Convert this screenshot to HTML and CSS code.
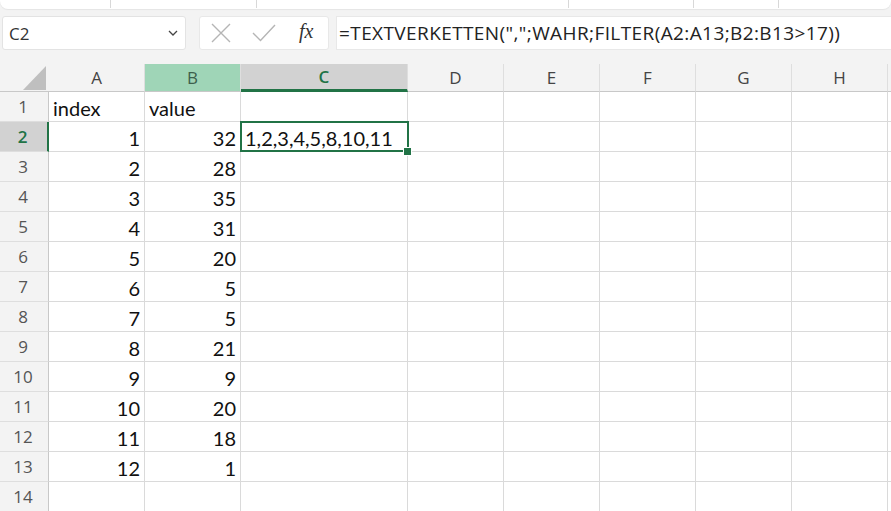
FILE: index.html
```html
<!DOCTYPE html>
<html>
<head>
<meta charset="utf-8">
<link rel="stylesheet" href="styles.css">
</head>
<body>
<div class="ribbon-edge">
  <span class="div d1"></span><span class="div d2"></span><span class="div d3"></span><span class="div d4"></span><span class="div d5"></span>
</div>
<div class="formula-row">
  <div class="name-box"><span>C2</span>
    <svg class="chev" width="10" height="6" viewBox="0 0 10 6"><path d="M1 1 L5 5 L9 1" fill="none" stroke="#444" stroke-width="1.3"/></svg>
  </div>
  <div class="fx-box">
    <svg width="20" height="20" viewBox="0 0 20 20"><path d="M1 1 L19 19 M19 1 L1 19" stroke="#b5b5b5" stroke-width="1.4" fill="none"/></svg>
    <svg width="24" height="18" viewBox="0 0 24 18"><path d="M1 9 L8.5 16.5 L23 1" stroke="#b5b5b5" stroke-width="1.4" fill="none"/></svg>
    <span class="fx">fx</span>
  </div>
  <div class="formula-input">=TEXTVERKETTEN(",";WAHR;FILTER(A2:A13;B2:B13&gt;17))</div>
</div>
<div class="sheet">
  <div class="corner"><svg width="23" height="24" viewBox="0 0 23 24"><path d="M23 0 L23 24 L0 24 Z" fill="#bfbfbf"/></svg></div>
  <div class="ch">A</div><div class="ch chB">B</div><div class="ch chC">C</div><div class="ch">D</div><div class="ch">E</div><div class="ch">F</div><div class="ch">G</div><div class="ch">H</div><div class="ch last"></div>

  <div class="rh">1</div><div class="c">index</div><div class="c">value</div><div class="c"></div><div class="c"></div><div class="c"></div><div class="c"></div><div class="c"></div><div class="c"></div><div class="c"></div>
  <div class="rh rh-sel">2</div><div class="c n">1</div><div class="c n">32</div><div class="c sel">1,2,3,4,5,8,10,11</div><div class="c"></div><div class="c"></div><div class="c"></div><div class="c"></div><div class="c"></div><div class="c"></div>
  <div class="rh">3</div><div class="c n">2</div><div class="c n">28</div><div class="c"></div><div class="c"></div><div class="c"></div><div class="c"></div><div class="c"></div><div class="c"></div><div class="c"></div>
  <div class="rh">4</div><div class="c n">3</div><div class="c n">35</div><div class="c"></div><div class="c"></div><div class="c"></div><div class="c"></div><div class="c"></div><div class="c"></div><div class="c"></div>
  <div class="rh">5</div><div class="c n">4</div><div class="c n">31</div><div class="c"></div><div class="c"></div><div class="c"></div><div class="c"></div><div class="c"></div><div class="c"></div><div class="c"></div>
  <div class="rh">6</div><div class="c n">5</div><div class="c n">20</div><div class="c"></div><div class="c"></div><div class="c"></div><div class="c"></div><div class="c"></div><div class="c"></div><div class="c"></div>
  <div class="rh">7</div><div class="c n">6</div><div class="c n">5</div><div class="c"></div><div class="c"></div><div class="c"></div><div class="c"></div><div class="c"></div><div class="c"></div><div class="c"></div>
  <div class="rh">8</div><div class="c n">7</div><div class="c n">5</div><div class="c"></div><div class="c"></div><div class="c"></div><div class="c"></div><div class="c"></div><div class="c"></div><div class="c"></div>
  <div class="rh">9</div><div class="c n">8</div><div class="c n">21</div><div class="c"></div><div class="c"></div><div class="c"></div><div class="c"></div><div class="c"></div><div class="c"></div><div class="c"></div>
  <div class="rh">10</div><div class="c n">9</div><div class="c n">9</div><div class="c"></div><div class="c"></div><div class="c"></div><div class="c"></div><div class="c"></div><div class="c"></div><div class="c"></div>
  <div class="rh">11</div><div class="c n">10</div><div class="c n">20</div><div class="c"></div><div class="c"></div><div class="c"></div><div class="c"></div><div class="c"></div><div class="c"></div><div class="c"></div>
  <div class="rh">12</div><div class="c n">11</div><div class="c n">18</div><div class="c"></div><div class="c"></div><div class="c"></div><div class="c"></div><div class="c"></div><div class="c"></div><div class="c"></div>
  <div class="rh">13</div><div class="c n">12</div><div class="c n">1</div><div class="c"></div><div class="c"></div><div class="c"></div><div class="c"></div><div class="c"></div><div class="c"></div><div class="c"></div>
  <div class="rh">14</div><div class="c"></div><div class="c"></div><div class="c"></div><div class="c"></div><div class="c"></div><div class="c"></div><div class="c"></div><div class="c"></div><div class="c"></div>
</div>
</body>
</html>
```
FILE: styles.css
```css
* { box-sizing: border-box; }
html, body { margin: 0; padding: 0; }
body {
  width: 891px; height: 511px; overflow: hidden;
  background: #f3f3f3;
  font-family: "Open Sans", "Noto Sans", sans-serif;
}
.ribbon-edge {
  height: 9px; background: #fff; border-radius: 0 0 8px 8px;
  position: relative; box-shadow: 0 1px 1px rgba(0,0,0,0.06);
}
.div { position: absolute; top: 0; height: 8px; width: 1px; background: #d8d8d8; }
.d1 { left: 110px; } .d2 { left: 256px; } .d3 { left: 568px; } .d4 { left: 693px; } .d5 { left: 778px; }
.formula-row { display: flex; height: 34px; margin-top: 7px; padding-left: 2px; }
.name-box {
  width: 184px; background: #fff; border: 1px solid #e3e3e3; border-radius: 3px;
  display: flex; align-items: center; justify-content: space-between;
  padding: 0 7px 0 6px; font-size: 17px; color: #333;
}
.fx-box {
  width: 130px; margin-left: 13px; background: #fff; border: 1px solid #e8e8e8; border-radius: 3px;
  display: flex; align-items: center; padding-left: 11px;
}
.fx-box svg:nth-child(1) { margin-right: 21px; }
.fx-box svg:nth-child(2) { margin-right: 23px; }
.fx { font-family: "Liberation Serif", serif; font-style: italic; font-size: 20px; color: #333; margin-top: -3px; }
.formula-input {
  flex: 1; margin-left: 7px; background: #fff; border: 1px solid #e8e8e8; border-right: none;
  display: flex; align-items: center; padding-left: 2px;
  font-size: 19px; color: #222; white-space: nowrap; letter-spacing: 0.4px;
}

.sheet {
  margin-top: 14px;
  display: grid;
  grid-template-columns: 49px 96px 96px 167px 96px 96px 96px 96px 96px 3px;
  grid-template-rows: 28px repeat(14, 30px);
}
.corner {
  border-bottom: 1px solid #c8c8c8;
  display: flex; align-items: flex-end; justify-content: flex-end;
  padding: 0 3px 1px 0;
}
.ch {
  display: flex; align-items: center; justify-content: center;
  font-size: 17px; color: #444; padding-bottom: 1px;
  border-bottom: 1px solid #c8c8c8; border-right: 1px solid #dedede;
  background: #f3f3f3;
}
.ch.last { border-right: none; }
.chB { background: #9fd5b7; color: #3d5f4c; }
.chC { background: #d2d2d2; color: #217346; border-bottom: 3px solid #217346; font-weight: 600; }
.rh {
  display: flex; align-items: center; justify-content: center;
  font-size: 17px; color: #555; background: #f3f3f3;
  border-bottom: 1px solid #dedede; border-right: 1px solid #c8c8c8;
  padding-right: 2px;
}
.rh-sel { background: #d2d2d2; color: #217346; border-right: 2px solid #217346; font-weight: 600; }
.c {
  background: #fff;
  border-right: 1px solid #dadada; border-bottom: 1px solid #dadada;
  font-family: "Lato", "Open Sans", sans-serif; font-size: 20px; color: #111;
  display: flex; align-items: flex-end; padding: 0 3px 1px 4px; line-height: 24px;
  white-space: nowrap;
}
.c.n { justify-content: flex-end; padding-right: 4px; }
.c.sel { position: relative; overflow: visible; }
.c.sel::before {
  content: ""; position: absolute; top: -1px; left: -1px; right: -2px; bottom: -1px;
  border: 2px solid #217346;
}
.c.sel::after {
  content: ""; position: absolute; right: -5px; bottom: -5px; width: 7px; height: 7px;
  background: #217346; border: 1px solid #fff; z-index: 2;
}
```
